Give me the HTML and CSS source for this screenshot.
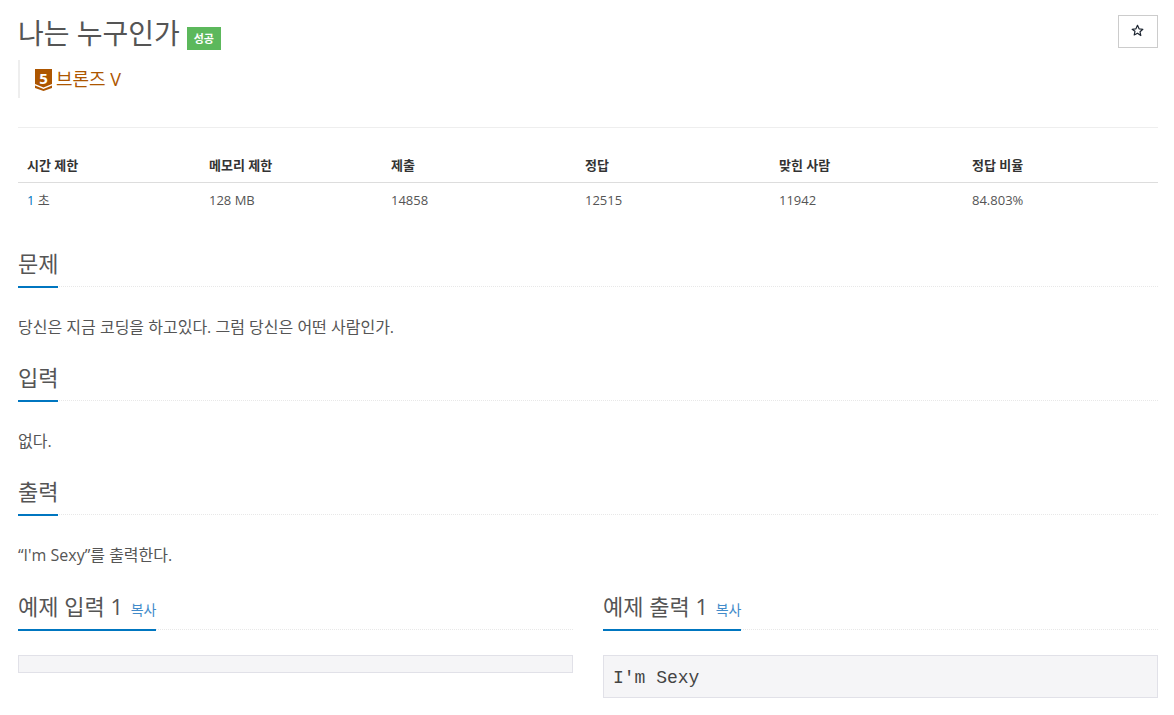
FILE: index.html
```html
<!DOCTYPE html>
<html lang="ko">
<head>
<meta charset="utf-8">
<title>나는 누구인가</title>
<link rel="stylesheet" href="styles.css">
</head>
<body>
<div class="page">
  <header class="head">
    <div class="title-row">
      <h1 class="title">나는 누구인가</h1>
      <span class="badge">성공</span>
    </div>
    <button class="star" type="button" aria-label="즐겨찾기">
      <svg width="13" height="13" viewBox="0 0 24 24"><path d="M12 2.500l2.900 6.400 7 .8-5.200 4.700 1.400 6.900L12 16.900 5.900 20.300l1.400-6.900L2.100 9.700l7-.8z" fill="none" stroke="#1c2430" stroke-width="2.200" stroke-linejoin="round"/></svg>
    </button>
  </header>
  <blockquote class="tier">
    <span class="tier-mark">
      <svg class="tier-icon" width="17" height="22" viewBox="0 0 17 22"><path d="M0 0h17v15l-8.500 3.500L0 15z" fill="#ad5600"/><path d="M0 16.500l8.500 3.500 8.500-3.500V19l-8.500 3L0 19z" fill="#ad5600"/></svg>
      <span class="tier-num">5</span>
    </span>
    <a class="tier-name">브론즈 V</a>
  </blockquote>
  <hr class="rule">
  <table class="info">
    <thead>
      <tr><th class="c1">시간 제한</th><th class="c2">메모리 제한</th><th class="c3">제출</th><th class="c4">정답</th><th class="c5">맞힌 사람</th><th>정답 비율</th></tr>
    </thead>
    <tbody>
      <tr><td><span class="link">1</span> 초</td><td>128 MB</td><td>14858</td><td>12515</td><td>11942</td><td>84.803%</td></tr>
    </tbody>
  </table>
  <section class="sec">
    <div class="sec-head"><h2 class="sec-title">문제</h2></div>
    <p class="sec-body">당신은 지금 코딩을 하고있다. 그럼 당신은 어떤 사람인가.</p>
  </section>
  <section class="sec">
    <div class="sec-head"><h2 class="sec-title">입력</h2></div>
    <p class="sec-body">없다.</p>
  </section>
  <section class="sec">
    <div class="sec-head"><h2 class="sec-title">출력</h2></div>
    <p class="sec-body">“I'm Sexy”를 출력한다.</p>
  </section>
  <div class="samples">
    <section class="sample">
      <div class="sec-head"><h2 class="sec-title">예제 입력 1 <a class="copy">복사</a></h2></div>
      <pre class="code"></pre>
    </section>
    <section class="sample">
      <div class="sec-head"><h2 class="sec-title">예제 출력 1 <a class="copy">복사</a></h2></div>
      <pre class="code">I'm Sexy</pre>
    </section>
  </div>
</div>
</body>
</html>
```
FILE: styles.css
```css
* { box-sizing: border-box; }
html, body { margin: 0; padding: 0; background: #fff; }
body {
  font-family: "Open Sans", "Noto Sans CJK KR", sans-serif;
  font-size: 14px;
  line-height: 20px;
  color: #555;
  overflow: hidden;
  height: 715px;
}
.page { padding: 15px 16px 0 18px; }
.head { display: flex; justify-content: space-between; align-items: flex-start; height: 45px; }
.title-row { display: flex; align-items: center; gap: 7px; height: 36px; }
.title { margin: 0; font-size: 28px; font-weight: 400; line-height: 36px; color: #555; }
.badge {
  display: block; width: 34px; height: 23px; margin-top: 10px;
  background: #5cb85c; color: #fff; font-size: 11px; font-weight: 700;
  line-height: 23px; text-align: center;
}
.star {
  width: 40px; height: 33px; padding: 0 1px 2px 0; background: #fff; border: 1px solid #ccc;
  display: flex; align-items: center; justify-content: center;
}
.tier {
  margin: 0; height: 38px; border-left: 2px solid #eee; padding-left: 15px;
  display: flex; align-items: center; gap: 4px;
}
.tier-mark { position: relative; display: block; width: 17px; height: 22px; margin-top: 1px; }
.tier-icon { display: block; }
.tier-num {
  position: absolute; left: 0; top: 0; width: 17px; height: 18px;
  font-size: 15px; font-weight: 700; line-height: 18px; text-align: center; color: #fff;
}
.tier-name { color: #ad5600; font-size: 18px; line-height: 20px; }
.rule { margin: 29px 0 0; border: 0; border-top: 1px solid #eee; }
.info { width: 100%; margin-top: 19px; border-collapse: collapse; table-layout: fixed; font-size: 13px; line-height: 17px; }
.info th { text-align: left; font-weight: 700; color: #333; padding: 10px 8px 8px 9px; border-bottom: 1px solid #ddd; }
.info td { padding: 9px 8px 8px 9px; color: #555; }
.c1 { width: 182px; }
.c2 { width: 182px; }
.c3 { width: 194px; }
.c4 { width: 194px; }
.c5 { width: 193px; }
.link { color: #0076c0; }
.sec-head { border-bottom: 1px dotted #e8e8e8; height: 44px; }
.sec-title {
  display: inline-block; height: 45px; margin: 0; padding-top: 5px; border-bottom: 2px solid #0076c0;
  font-size: 22px; font-weight: 400; line-height: 30px; color: #555;
}
.sec-body { margin: 0; padding-top: 30px; height: 70px; font-size: 16px; line-height: 20px; }
.sec:first-of-type { margin-top: 26px; }
.samples { display: grid; grid-template-columns: 555px 555px; column-gap: 30px; margin-top: 1px; }
.copy { color: #428bca; font-size: 14px; margin-left: 2px; }
.code {
  margin: 25px 0 0; padding: 11px 9px 8px; min-height: 18px;
  background: #f5f5f7; border: 1px solid #e1e1e8;
  font-family: "Liberation Mono", monospace; font-size: 18px; line-height: 22px; color: #444;
}
.code:empty { padding: 0; }
```
